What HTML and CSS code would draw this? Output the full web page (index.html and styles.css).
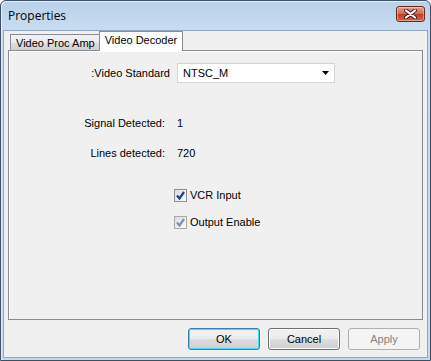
FILE: index.html
```html
<!DOCTYPE html>
<html lang="en">
<head>
    <meta charset="UTF-8">
    <title>Properties</title>
    <link rel="stylesheet" href="styles.css">
</head>
<body>
    <div class="window">
        <div class="titlebar">
            <span class="title">Properties</span>
            <span class="close">
                <svg width="15" height="10" viewBox="0 0 15 10">
                    <path d="M3 1.5 L12 8.5 M12 1.5 L3 8.5" stroke="#4a1a12" stroke-width="4" stroke-linecap="round"/>
                    <path d="M3 1.5 L12 8.5 M12 1.5 L3 8.5" stroke="#fff" stroke-width="2.2" stroke-linecap="round"/>
                </svg>
            </span>
        </div>

        <div class="client">
            <div class="tabs">
                <div class="tab">Video Proc Amp</div>
                <div class="tab active">Video Decoder</div>
            </div>

            <div class="panel">
                <div class="std-row">
                    <span class="label">:Video Standard</span>
                    <div class="combo">
                        <span>NTSC_M</span>
                        <svg width="7" height="4" viewBox="0 0 7 4"><path d="M0 0 H7 L3.5 4 Z" fill="#000"/></svg>
                    </div>
                </div>

                <div class="info first">
                    <span class="label">Signal Detected:</span>
                    <span class="value">1</span>
                </div>
                <div class="info">
                    <span class="label">Lines detected:</span>
                    <span class="value">720</span>
                </div>

                <label class="check first">
                    <span class="box">
                        <svg width="9" height="9" viewBox="0 0 9 9"><path d="M1 4.5 L3.5 7.5 L8 1" stroke="#1f3f8f" stroke-width="2.2" fill="none"/></svg>
                    </span>
                    VCR Input
                </label>
                <label class="check">
                    <span class="box disabled">
                        <svg width="9" height="9" viewBox="0 0 9 9"><path d="M1 4.5 L3.5 7.5 L8 1" stroke="#7d8fb8" stroke-width="2.2" fill="none"/></svg>
                    </span>
                    Output Enable
                </label>
            </div>

            <div class="buttons">
                <button class="btn default">OK</button>
                <button class="btn">Cancel</button>
                <button class="btn" disabled>Apply</button>
            </div>
        </div>
    </div>
</body>
</html>
```

FILE: styles.css
```css
body {
    margin: 0;
    font-family: "Liberation Sans", Arial, sans-serif;
    font-size: 11px;
    color: #000;
    background: #fff;
}
.window {
    width: 431px;
    height: 361px;
    box-sizing: border-box;
    border: 1px solid #3d4f63;
    border-radius: 6px 6px 0 0;
    background: linear-gradient(#b9d1ea, #c9dcf0 30px, #c4d8ee);
    padding: 0 2px 2px;
    display: flex;
    flex-direction: column;
    box-shadow: inset 1px 1px 0 #e6eef8;
}
.titlebar {
    height: 29px;
    flex-shrink: 0;
    display: flex;
    align-items: center;
    justify-content: space-between;
    padding: 0 3px 0 5px;
}
.title {
    font-family: "Open Sans", sans-serif;
    font-size: 12px;
    margin-top: -1px;
}
.close {
    width: 27px;
    height: 14px;
    border: 1px solid #6b2a1e;
    border-radius: 3px;
    background: linear-gradient(#e0a294, #cf6a55 50%, #bf3d24 51%, #d26a52);
    display: flex;
    align-items: center;
    justify-content: center;
    margin-top: -3px;
    box-shadow: inset 0 0 0 1px rgba(255,255,255,0.35);
}
.client {
    flex: 1;
    min-height: 0;
    background: #f0f0f0;
    border: 1px solid #92a7bf;
    display: flex;
    flex-direction: column;
    padding: 0 4px;
}
.tabs {
    display: flex;
    align-items: flex-end;
    padding-left: 2px;
    height: 19px;
    flex-shrink: 0;
}
.tab {
    height: 16px;
    line-height: 16px;
    padding: 0 4px 0 5px;
    border: 1px solid #898c95;
    border-bottom: none;
    background: linear-gradient(#f2f2f2, #ebebeb 50%, #dddddd 51%, #cfcfcf);
    margin-bottom: -1px;
}
.tab.active {
    height: 19px;
    line-height: 17px;
    background: #fff;
    margin-left: -1px;
    padding: 0 5px 0 5px;
    position: relative;
}
.panel {
    height: 270px;
    flex-shrink: 0;
    box-sizing: border-box;
    border: 1px solid #898c95;
    box-shadow: inset 1px 1px 0 #fff;
    display: flex;
    flex-direction: column;
    padding-top: 12px;
}
.std-row {
    display: flex;
    align-items: center;
    height: 20px;
}
.std-row .label {
    width: 161px;
    text-align: right;
    margin-right: 7px;
}
.combo {
    height: 18px;
    background: #fff;
    border: 1px solid #d5d5d5;
    display: flex;
    align-items: center;
    justify-content: space-between;
    padding: 0 5px;
    width: 146px;
}
.info {
    display: flex;
    height: 16px;
    line-height: 16px;
    margin-top: 14px;
}
.info.first {
    margin-top: 32px;
}
.info .label {
    width: 156px;
    text-align: right;
    margin-right: 12px;
}
.check {
    display: flex;
    align-items: center;
    height: 16px;
    margin-top: 11px;
    margin-left: 165px;
    gap: 3px;
}
.check.first {
    margin-top: 26px;
}
.box {
    width: 11px;
    height: 11px;
    border: 1px solid #8e8f8f;
    background: linear-gradient(135deg, #dcdcdc, #fbfbfb);
    display: flex;
    align-items: center;
    justify-content: center;
}
.box.disabled {
    border-color: #a8a8a8;
}
.buttons {
    display: flex;
    justify-content: flex-end;
    gap: 8px;
    margin-top: 8px;
    padding-right: 3px;
}
.btn {
    width: 72px;
    height: 22px;
    font-family: "Liberation Sans", Arial, sans-serif;
    font-size: 11px;
    color: #000;
    border: 1px solid #707070;
    border-radius: 3px;
    background: linear-gradient(#f2f2f2, #ebebeb 50%, #dddddd 51%, #cfcfcf);
    box-shadow: inset 0 0 0 1px #fbfbfb;
    padding: 0;
}
.btn.default {
    border-color: #3c7fb1;
    box-shadow: inset 0 0 0 1px #48d7fa;
}
.btn:disabled {
    color: #838383;
    border-color: #adb2b5;
    background: #f4f4f4;
    box-shadow: none;
}
```
